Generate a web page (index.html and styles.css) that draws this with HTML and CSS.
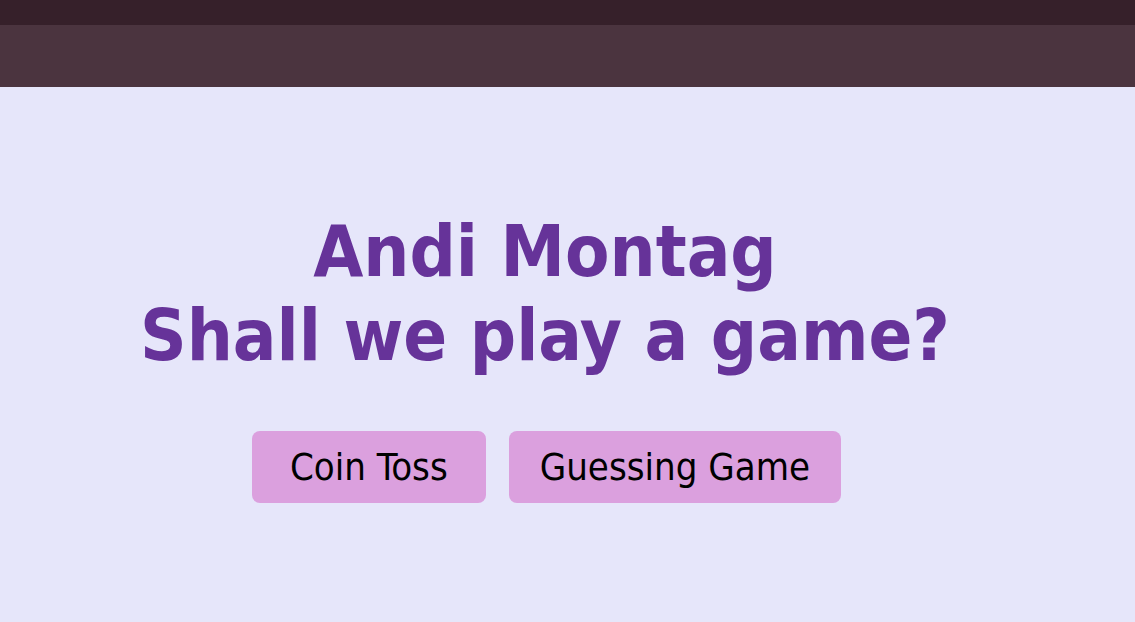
FILE: index.html
```html
<!DOCTYPE html>
<html lang="en">
<head>
<meta charset="utf-8">
<title>Andi Montag</title>
<link rel="stylesheet" href="styles.css">
</head>
<body>
  <div class="topbar"></div>
  <header class="navbar"></header>
  <main class="hero">
    <h1 class="title">Andi Montag<br>Shall we play a game?</h1>
    <div class="actions">
      <button class="btn btn-coin">Coin Toss</button>
      <button class="btn">Guessing Game</button>
    </div>
  </main>
</body>
</html>
```
FILE: styles.css
```css
html, body {
  margin: 0;
  padding: 0;
}
body {
  background: #e6e6fa;
  font-family: "DejaVu Sans Condensed", "DejaVu Sans", sans-serif;
  font-stretch: condensed;
  min-height: 622px;
}
.topbar {
  height: 25px;
  background: #36202a;
}
.navbar {
  height: 62px;
  background: #4b343f;
}
.hero {
  display: flex;
  flex-direction: column;
  align-items: center;
  padding: 122px 45px 0 0;
}
.title {
  margin: 0;
  color: #663399;
  font-size: 72px;
  font-weight: bold;
  line-height: 84px;
  text-align: center;
}
.actions {
  display: flex;
  gap: 23px;
  margin-top: 54px;
  margin-left: 3px;
}
.btn {
  font-family: inherit;
  font-stretch: condensed;
  font-size: 38px;
  color: #000;
  background: #dba0de;
  border: none;
  border-radius: 8px;
  padding: 14px 31px;
  line-height: 44px;
  cursor: pointer;
}
.btn-coin {
  padding: 14px 38px;
}
```
